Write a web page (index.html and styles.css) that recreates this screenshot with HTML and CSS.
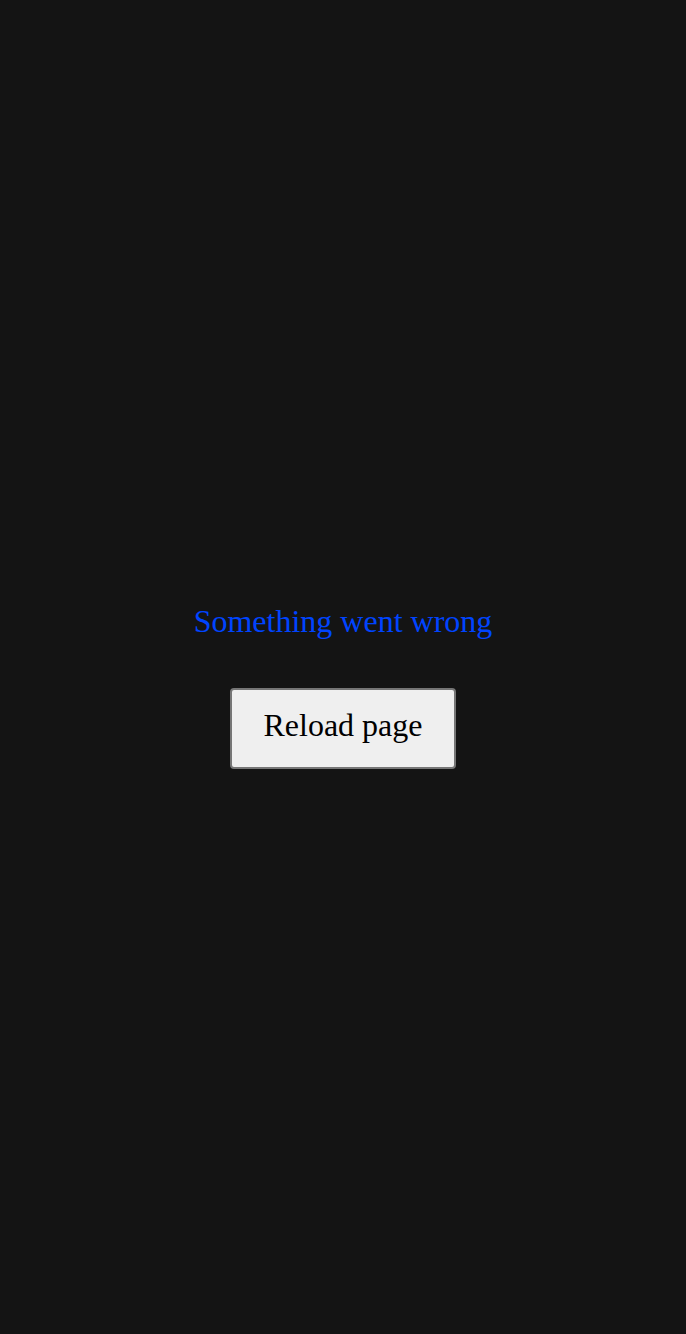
FILE: index.html
```html
<!DOCTYPE html>
<html>
<head>
<meta charset="utf-8">
<link rel="stylesheet" href="styles.css">
</head>
<body>
<main class="error">
  <p class="error-msg">Something went wrong</p>
  <button class="reload-btn" type="button">Reload page</button>
</main>
</body>
</html>
```
FILE: styles.css
```css
html, body {
  margin: 0;
  padding: 0;
  height: 100%;
  background: #141414;
}
.error {
  height: 100%;
  display: flex;
  flex-direction: column;
  align-items: center;
  justify-content: center;
  font-family: "Liberation Serif", "Times New Roman", serif;
  padding-top: 38px;
  box-sizing: border-box;
}
.error-msg {
  margin: 0 0 48px;
  font-size: 32px;
  color: #0044ff;
}
.reload-btn {
  font-family: "Liberation Serif", "Times New Roman", serif;
  font-size: 32px;
  color: #000;
  background: #efefef;
  border: 2px solid #767676;
  border-radius: 4px;
  padding: 17px 31px 23px;
}
```
